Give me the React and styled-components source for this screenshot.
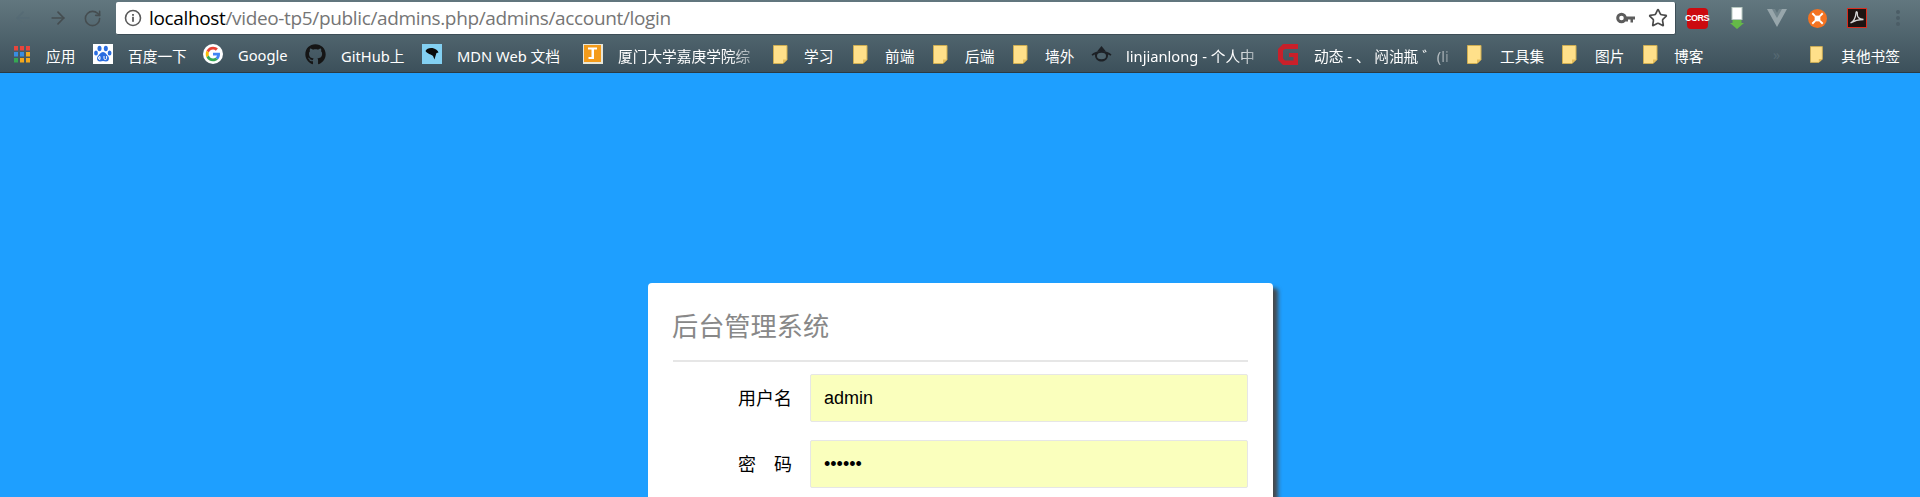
import React from "react";
import styled, { createGlobalStyle } from "styled-components";
import { ArrowLeft, ArrowRight, RotateCw, Star } from "lucide-react";
import { FaGithub } from "react-icons/fa";

const GlobalStyle = createGlobalStyle`
  html, body {
    margin: 0;
    padding: 0;
    height: 497px;
    overflow: hidden;
    background: #1e9fff;
    font-family: "Open Sans", "Noto Sans CJK SC", sans-serif;
  }
`;

const CJK = `"Noto Sans", "Noto Sans CJK SC", sans-serif`;

// icons
const Apps = () => {
  const colors = ["#e8453c", "#e8453c", "#e8453c", "#3a8de0", "#3a8de0", "#f4a81c", "#35a853", "#f4a81c", "#f4a81c"];
  return (
    <svg width="18" height="18" viewBox="0 0 18 18">
      {colors.map((c, i) => (
        <rect key={i} x={1 + (i % 3) * 6} y={1 + Math.floor(i / 3) * 6} width="4" height="4.500" fill={c} />
      ))}
    </svg>
  );
};

const Baidu = () => (
  <svg width="20" height="20" viewBox="0 0 20 20">
    <rect width="20" height="20" fill="#fff" />
    <g fill="#2b6de0">
      <ellipse cx="6.500" cy="4.500" rx="2" ry="2.800" />
      <ellipse cx="12.800" cy="4.500" rx="2" ry="2.800" />
      <ellipse cx="3" cy="9" rx="1.900" ry="2.500" />
      <ellipse cx="16.600" cy="9" rx="1.900" ry="2.500" />
      <path d="M10 8c-2.500 0-3.400 2.400-5 4-1.600 1.700-1.300 5.500 2 5.500 1 0 2-.4 3-.4s2 .4 3 .4c3.300 0 3.600-3.800 2-5.500-1.600-1.600-2.500-4-5-4z" />
    </g>
    <path d="M7 12.500v3M7 12.500a1.500 1.500 0 1 0 0 3M11 12v2.300a1.200 1.200 0 0 0 2.600 0V12" fill="none" stroke="#fff" strokeWidth="1" />
  </svg>
);

const GoogleG = () => (
  <svg width="20" height="20" viewBox="0 0 48 48">
    <circle cx="24" cy="24" r="24" fill="#fff" />
    <g transform="translate(6.500 6.500) scale(.73)">
      <path fill="#ea4335" d="M24 9.500c3.500 0 6.700 1.200 9.200 3.600l6.900-6.900C35.900 2.400 30.500 0 24 0 14.600 0 6.500 5.400 2.600 13.200l8 6.200C12.400 13.600 17.700 9.500 24 9.500z" />
      <path fill="#4285f4" d="M47 24.500c0-1.600-.1-3.100-.4-4.500H24v9h13c-.6 3-2.200 5.500-4.800 7.200l7.700 6C44.400 37.800 47 31.700 47 24.500z" />
      <path fill="#fbbc05" d="M10.600 28.600c-.5-1.400-.8-3-.8-4.600s.3-3.200.8-4.600l-8-6.200C.9 16.500 0 20.100 0 24s.9 7.500 2.600 10.800l8-6.200z" />
      <path fill="#34a853" d="M24 48c6.500 0 11.900-2.100 15.900-5.800l-7.700-6c-2.200 1.400-4.900 2.300-8.200 2.300-6.300 0-11.600-4.100-13.400-9.900l-8 6.200C6.500 42.600 14.600 48 24 48z" />
    </g>
  </svg>
);

const Mdn = () => (
  <svg width="20" height="20" viewBox="0 0 20 20">
    <rect width="20" height="20" fill="#83d0f2" />
    <path d="M3.500 7C4.500 4.500 7.500 3.500 10.500 4c3 .5 5.500 2.500 6 4.500l-2 .5-1 3-1 3.500-1.500-3.500C8.500 10 5.500 10 3.500 7z" fill="#0a0a0a" />
  </svg>
);

const Xmu = () => (
  <svg width="20" height="20" viewBox="0 0 20 20">
    <rect width="20" height="20" fill="#e8e6d8" />
    <rect x="1" y="1" width="17" height="17" fill="#f49b1a" />
    <path d="M5 3.500h9v2h-3V15H5.500v-2H8.500V5.500H5z" fill="#fff" />
  </svg>
);

const Folder = () => (
  <svg width="15" height="19" viewBox="0 0 15 19">
    <path d="M.5.500h13.500v14l-4 4H.5z" fill="#ffe08a" stroke="#cfae52" />
    <path d="M10 18.500v-4h4.500z" fill="#e5bd5a" />
  </svg>
);

const Juejin = () => (
  <svg width="21" height="18" viewBox="0 0 21 18">
    <path d="M10.500 1l4.500 5.500H6z" fill="#1d2126" />
    <path d="M.5 9.500C3 7.500 6 6 10.500 6s7.500 1.500 10 3.500l-1 1.200c-1-.6-1.700-1-2.500-1.300C17.500 13 14.500 16.500 10.500 16.500S3.500 13 4 9.400c-.8.300-1.500.7-2.500 1.300z" fill="#1d2126" />
    <ellipse cx="10.500" cy="11" rx="4.500" ry="3.200" fill="#4d626c" />
  </svg>
);

const RedG = () => (
  <svg width="21" height="21" viewBox="0 0 21 21">
    <path d="M20 5V0H5L0 5v11l5 5h15V9h-9v4h4.500v3.500H7l-2-2v-8L7 5z" fill="#c9202a" />
  </svg>
);

const InfoIcon = () => (
  <svg width="18" height="18" viewBox="0 0 18 18">
    <circle cx="9" cy="9" r="7.500" fill="none" stroke="#5a5a5a" strokeWidth="1.600" />
    <rect x="8.100" y="7.800" width="1.800" height="5" fill="#5a5a5a" />
    <rect x="8.100" y="5" width="1.800" height="1.800" fill="#5a5a5a" />
  </svg>
);

const KeyIcon = () => (
  <svg width="19" height="12" viewBox="0 0 19 12">
    <circle cx="5.500" cy="6" r="3.800" fill="none" stroke="#5c5c5c" strokeWidth="3" />
    <path d="M9 4.500h10v3h-2v3h-2.500v-3H12v2H9.500z" fill="#5c5c5c" />
  </svg>
);

const GreenArrow = () => (
  <svg width="14" height="22" viewBox="0 0 14 22">
    <rect x="2" y=".5" width="10" height="12" fill="#fff" stroke="#b9c9c2" />
    <path d="M2.500 13h9v3H14l-7 6-7-6h2.500z" fill="#65b948" />
  </svg>
);

const VueIcon = () => (
  <svg width="20" height="18" viewBox="0 0 20 18">
    <path d="M0 0h7l3 5 3-5h7L10 18z" fill="#97a6ab" />
    <path d="M5 0h3l2 4 2-4h3l-5 9z" fill="#72858c" />
  </svg>
);

const OrangeIcon = () => (
  <svg width="19" height="19" viewBox="0 0 20 20">
    <circle cx="10" cy="10" r="10" fill="#f47321" />
    <rect x="7" y="7" width="6" height="6" fill="#fff" />
    <path d="M4.500 4.500l3 3M15.500 4.500l-3 3M4.500 15.500l3-3M15.500 15.500l-3-3" stroke="#fff" strokeWidth="2" />
  </svg>
);

const AcrobatIcon = () => (
  <svg width="20" height="20" viewBox="0 0 20 20">
    <rect x=".5" y=".5" width="19" height="19" fill="#1e1412" stroke="#d92d1e" />
    <path d="M3.500 15c3-1.500 5-5 5.500-10 .2-2 1.500-1.500 1.300.5C10 9 12 11.500 16.500 11.500c-4 0-8 .5-13 3.500z" fill="none" stroke="#d8d8d8" strokeWidth="1.300" />
  </svg>
);

// browser chrome
const Chrome = styled.header`
  height: 72px;
  background: linear-gradient(#62777f, #3c505b);
  border-bottom: 1px solid #2a3a44;
`;

const Toolbar = styled.div`
  display: flex;
  align-items: center;
  height: 36px;
`;

const NavButtons = styled.div`
  display: flex;
  align-items: center;
  width: 116px;
  padding-left: 13px;
  box-sizing: border-box;
  gap: 15px;
`;

const NavButton = styled.span`
  display: flex;
  color: ${(p) => (p.$faded ? "#566b75" : "#454d50")};
`;

const Omnibox = styled.div`
  flex: none;
  display: flex;
  align-items: center;
  width: 1560px;
  height: 33px;
  box-sizing: border-box;
  padding: 0 7px 0 8px;
  background: #fff;
  border-radius: 2px;
  border: 1px solid #3d4e57;
  border-width: 0 1px 1px 0;
`;

const Url = styled.div`
  flex: 1;
  margin-left: 7px;
  font-family: "Open Sans", sans-serif;
  font-size: 19px;
  letter-spacing: -0.35px;
  color: #757575;
  white-space: nowrap;
`;

const Host = styled.span`
  color: #000;
`;

const OmniIcons = styled.div`
  display: flex;
  align-items: center;
  gap: 13px;
`;

const Extensions = styled.div`
  display: flex;
  align-items: center;
  margin-left: 1px;
`;

const Extension = styled.span`
  display: flex;
  align-items: center;
  justify-content: center;
  width: 40px;
  height: 30px;
`;

const CorsBadge = styled.span`
  display: flex;
  align-items: center;
  justify-content: center;
  width: 21px;
  height: 21px;
  border-radius: 4px;
  background: #cc0a0f;
  color: #fff;
  font-family: "Liberation Sans", sans-serif;
  font-size: 9px;
  font-weight: 700;
  letter-spacing: -0.5px;
`;

const Dots = styled.span`
  display: flex;
  flex-direction: column;
  gap: 2px;
  margin-left: 19px;

  i {
    width: 4px;
    height: 4px;
    border-radius: 50%;
    background: #4b5d66;
  }
`;

const Bookmarks = styled.nav`
  display: flex;
  align-items: center;
  height: 36px;
  padding-left: 13px;
`;

const Bookmark = styled.a`
  flex: none;
  display: flex;
  align-items: center;
  gap: ${(p) => p.$gap || 15}px;
  width: ${(p) => p.$width}px;
  height: 36px;
  color: #fff;
  font-family: ${CJK};
  font-size: 14.700px;
  white-space: nowrap;
  overflow: hidden;
`;

const BookmarkLabel = styled.span`
  padding-top: 2px;
  ${(p) =>
    p.$fade &&
    `
    flex: 1;
    min-width: 0;
    overflow: hidden;
    -webkit-mask-image: linear-gradient(to right, #000 72%, transparent 96%);
    mask-image: linear-gradient(to right, #000 72%, transparent 96%);
  `}
`;

const MoreBookmarks = styled.span`
  flex: none;
  width: 37px;
  margin-left: 68px;
  color: #566973;
  font-size: 14px;
  font-family: ${CJK};
`;

// login
const Stage = styled.main`
  display: flex;
  justify-content: center;
  padding-top: 210px;
`;

const Card = styled.form`
  flex: none;
  width: 625px;
  height: 400px;
  margin-left: 1px;
  box-sizing: border-box;
  padding: 0 25px;
  background: #fff;
  border-radius: 4px;
  box-shadow: 5px 5px 4px #46494c;
`;

const Title = styled.h2`
  margin: 0 0 12px;
  height: 79px;
  box-sizing: border-box;
  padding-top: 23px;
  border-bottom: 2px solid #e6e6e6;
  color: #888;
  font-family: ${CJK};
  font-size: 26.200px;
  font-weight: 400;
  line-height: 40px;
  text-indent: -1px;
`;

const Row = styled.div`
  display: flex;
  align-items: center;
  margin-bottom: 18px;
`;

const Label = styled.label`
  flex: none;
  width: 119px;
  margin: -2px 18px 0 0;
  text-align: right;
  color: #000;
  font-family: ${CJK};
  font-size: 18px;
  white-space: pre;
`;

const Input = styled.input`
  flex: 1;
  min-width: 0;
  height: 48px;
  box-sizing: border-box;
  padding: 0 13px;
  background: #faffbd;
  border: 1px solid #e6e6e6;
  border-radius: 2px;
  color: #000;
  font-family: "Liberation Sans", sans-serif;
  font-size: 18px;
  outline: none;
`;

const items = [
  { icon: <Apps />, label: "应用", width: 80, gap: 15 },
  { icon: <Baidu />, label: "百度一下", width: 110 },
  { icon: <GoogleG />, label: "Google", width: 102, gap: 15 },
  { icon: <FaGithub size={21} color="#151515" />, label: "GitHub上", width: 117 },
  { icon: <Mdn />, label: "MDN Web 文档", width: 161 },
  { icon: <Xmu />, label: "厦门大学嘉庚学院综", width: 190, fade: true, gap: 15 },
  { icon: <Folder />, label: "学习", width: 80, gap: 16 },
  { icon: <Folder />, label: "前端", width: 80, gap: 17 },
  { icon: <Folder />, label: "后端", width: 80, gap: 17 },
  { icon: <Folder />, label: "墙外", width: 78, gap: 17 },
  { icon: <Juejin />, label: "linjianlong - 个人中", width: 187, fade: true, gap: 14 },
  { icon: <RedG />, label: "动态 - 、 闷油瓶 ゛(li", width: 189, fade: true, gap: 15 },
  { icon: <Folder />, label: "工具集", width: 95, gap: 18 },
  { icon: <Folder />, label: "图片", width: 81, gap: 18 },
  { icon: <Folder />, label: "博客", width: 62, gap: 16 },
];

const App = () => {
  return (
    <>
      <GlobalStyle />
      <Chrome>
        <Toolbar>
          <NavButtons>
            <NavButton $faded><ArrowLeft size={20} /></NavButton>
            <NavButton><ArrowRight size={20} /></NavButton>
            <NavButton><RotateCw size={19} /></NavButton>
          </NavButtons>
          <Omnibox>
            <InfoIcon />
            <Url><Host>localhost</Host>/video-tp5/public/admins.php/admins/account/login</Url>
            <OmniIcons>
              <KeyIcon />
              <Star size={20} color="#4a4a4a" />
            </OmniIcons>
          </Omnibox>
          <Extensions>
            <Extension><CorsBadge>CORS</CorsBadge></Extension>
            <Extension><GreenArrow /></Extension>
            <Extension><VueIcon /></Extension>
            <Extension><OrangeIcon /></Extension>
            <Extension><AcrobatIcon /></Extension>
            <Dots><i /><i /><i /></Dots>
          </Extensions>
        </Toolbar>
        <Bookmarks>
          {items.map((item) => (
            <Bookmark key={item.label} $width={item.width} $gap={item.gap}>
              {item.icon}
              <BookmarkLabel $fade={item.fade}>{item.label}</BookmarkLabel>
            </Bookmark>
          ))}
          <MoreBookmarks>»</MoreBookmarks>
          <Bookmark $width={90} $gap={18}>
            <Folder />
            <BookmarkLabel>其他书签</BookmarkLabel>
          </Bookmark>
        </Bookmarks>
      </Chrome>
      <Stage>
        <Card>
          <Title>后台管理系统</Title>
          <Row>
            <Label>用户名</Label>
            <Input type="text" defaultValue="admin" />
          </Row>
          <Row>
            <Label>{"密　码"}</Label>
            <Input type="password" defaultValue="123456" />
          </Row>
        </Card>
      </Stage>
    </>
  );
};

export default App;
